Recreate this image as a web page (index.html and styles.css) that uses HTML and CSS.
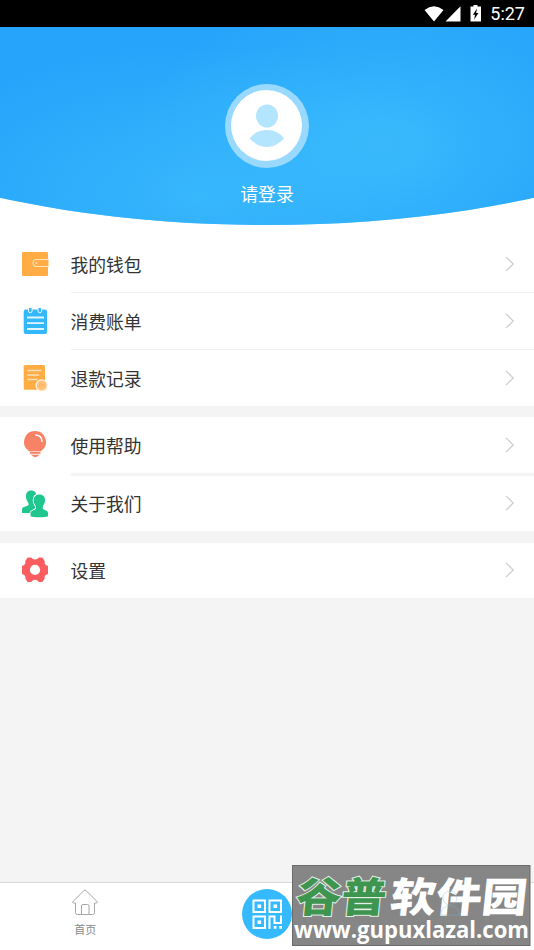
FILE: index.html
```html
<!DOCTYPE html>
<html lang="zh-CN">
<head>
<meta charset="utf-8">
<title>我的</title>
<link rel="stylesheet" href="styles.css">
</head>
<body>
<div class="screen">
  <div class="status">
    <svg width="58" height="18" viewBox="0 0 58 18">
      <path fill="#fff" d="M0.500 5Q10 -2.300 19.500 5L10 16.500zM21.500 16.500H36.500V1.200z"/>
      <path fill="#fff" d="M49.500 1.500V0h4v1.500h3.500V16.500H46.500V1.500z"/>
      <path fill="#000" d="M53 3.500 48.900 9.700h2.200l-1 4.700 4.400-6.500h-2.400z"/>
    </svg>
    <span class="clock">5:27</span>
  </div>
  <header class="profile">
    <div class="avatar">
      <svg width="72" height="72" viewBox="0 0 72 72">
        <circle cx="35.500" cy="35.500" r="35.500" fill="#fff"/>
        <ellipse cx="36" cy="26" rx="11" ry="11.500" fill="#b3e5ff"/>
        <path fill="#b3e5ff" d="M18.500 48.500Q25 40 36 40T53 48.500Q45 57 36 57T18.500 48.500z"/>
      </svg>
    </div>
    <div class="login">请登录</div>
  </header>
  <main>
    <section class="group wallet">
      <div class="row">
        <svg class="icon" viewBox="0 0 28 28"><rect x="1" y="1" width="26" height="24" rx="1.200" fill="#ffac44"/><path d="M27.500 8.500H15.500a3.500 3.500 0 0 0 0 7H27.500" fill="#ffac44"/><path d="M27 8.500H15.500a3.500 3.500 0 0 0 0 7H27" fill="none" stroke="#ffe3bd" stroke-width="1.200"/><circle cx="15.300" cy="12" r="1" fill="#ffe3bd"/></svg>
        <div class="cell"><span>我的钱包</span><svg class="arrow" viewBox="0 0 10 16"><path d="M1 .8 8.200 8 1 15.200"/></svg></div>
      </div>
      <div class="row">
        <svg class="icon" viewBox="0 0 28 28"><rect x="2.700" y="1.500" width="23.300" height="24.500" rx="2" fill="#33b8fb"/><path d="M7.500 0v3a1.800 1.800 0 0 0 3.600 0V0M17 0v3a1.800 1.800 0 0 0 3.600 0V0" fill="#33b8fb" stroke="#fff" stroke-width=".9"/><path d="M6 9.500h17M6 15.200h17M6 21h17" stroke="#e2f6ff" stroke-width="1.800"/></svg>
        <div class="cell"><span>消费账单</span><svg class="arrow" viewBox="0 0 10 16"><path d="M1 .8 8.200 8 1 15.200"/></svg></div>
      </div>
      <div class="row">
        <svg class="icon" viewBox="0 0 28 28"><rect x="2.700" y="0" width="21.300" height="24.800" rx="1.500" fill="#ffac44"/><path d="M6.300 5.500h14M6.300 10h12M6.300 14.500h10" stroke="#ffe2b8" stroke-width="1.500"/><circle cx="20.700" cy="20.500" r="5.600" fill="#ffc27b" stroke="#fff1df" stroke-width="1.300"/><path d="M18.500 21.500v-2.500h4v3h-3l3-3" fill="none" stroke="#ffb05a" stroke-width=".8"/></svg>
        <div class="cell"><span>退款记录</span><svg class="arrow" viewBox="0 0 10 16"><path d="M1 .8 8.200 8 1 15.200"/></svg></div>
      </div>
    </section>
    <section class="group help">
      <div class="row">
        <svg class="icon" viewBox="0 0 28 28"><path d="M14 1a10.900 10.900 0 0 1 6.500 19.700q-1.700 1.300-2 1.800h-9q-.3-.5-2-1.800A10.900 10.900 0 0 1 14 1z" fill="#f88266"/><path d="M14.800 5q6 .6 6.200 6.200" fill="none" stroke="#fff" stroke-width="1.600" stroke-linecap="round"/><path d="M9 22h10.500v1.900H9zM9.500 24.500h9.500l-2.500 1.700L14.200 27.500 12 26.200z" fill="#f88266"/><path d="M8.500 21.500h11M9 24.100h10.500" fill="none" stroke="#fff" stroke-width=".6"/></svg>
        <div class="cell"><span>使用帮助</span><svg class="arrow" viewBox="0 0 10 16"><path d="M1 .8 8.200 8 1 15.200"/></svg></div>
      </div>
      <div class="row">
        <svg class="icon" viewBox="0 0 28 28"><path d="M10 .5c4 0 5.500 2.500 5.300 6 0 3-1.500 4-2 5.500v3l5 2v6H1v-4c.5-2.500 5-2.500 6.500-4 .7-1-.2-2-.8-3C5.500 10 5 8.500 5 6.500 5 3 6.500.5 10 .5z" fill="#1fc78f"/><path d="M18.500 4.500c4 0 5.700 2.500 5.500 6 0 3-1.500 4.200-2.200 6v2.300c1.500 1.500 5.200 1.800 5.200 4.200v3.300c-3 1.300-14 1.300-17.500 0V23c.3-2.500 4-2.700 5.500-4.200V16.500c-1-2-2.300-3-2.300-6 0-3.500 1.800-6 5.800-6z" fill="#1fc78f" stroke="#fff" stroke-width="2" paint-order="stroke"/></svg>
        <div class="cell"><span>关于我们</span><svg class="arrow" viewBox="0 0 10 16"><path d="M1 .8 8.200 8 1 15.200"/></svg></div>
      </div>
    </section>
    <section class="group settings">
      <div class="row">
        <svg class="icon" viewBox="0 0 28 28"><path fill="#fa5d60" fill-rule="evenodd" d="M6.600 1.500h3.600q1.300 2 3.800 2t3.800-2h3.600l2.300 3.500q-.8 3.900 3.300 5v8q-4.200 1-3.300 4.500l-2.300 3.500h-3.600q-1.300-2.200-3.800-2.200T10.200 26H6.600l-2.300-3.500Q5.200 19 1 18v-8q4.100-1.100 3.300-5zM14 8.800a5.100 5.100 0 1 0 0 10.200 5.100 5.100 0 0 0 0-10.200z"/></svg>
        <div class="cell"><span>设置</span><svg class="arrow" viewBox="0 0 10 16"><path d="M1 .8 8.200 8 1 15.200"/></svg></div>
      </div>
    </section>
  </main>
  <nav class="tabs">
    <div class="tab">
      <svg width="26" height="27" viewBox="0 0 26 27"><path d="M3.500 14H1.200Q.3 13.500 1 12.500L12 1.500q1-.9 2 0l11 11q.7 1-.2 1.500h-2.300v9.500q0 2-2 2h-15q-2 0-2-2V14M9.500 25.500V17q0-1.500 1.500-1.500h4.500q1.500 0 1.500 1.500v8.500" fill="none" stroke="#a5a5a5" stroke-width="1"/></svg>
      <span>首页</span>
    </div>
    <div class="tab scan">
      <svg width="50" height="50" viewBox="0 0 50 50"><circle cx="25" cy="25" r="25" fill="#35baff"/><g fill="none" stroke="#fff" stroke-width="2"><path d="M11.500 11.500h11.500V23H11.500zM27.500 11.500H39V23H27.500zM11.500 27.500h11.500V39H11.500z"/><path d="M27.500 40V27.500h5V34H39v-7.500"/></g><path fill="#fff" d="M15.500 15.500h3.600v3.600h-3.600zM31.500 15.500h3.600v3.600h-3.600zM15.500 31.500h3.600v3.600h-3.600zM31.800 37h2.700v2.700h-2.700zM37.300 37H40v2.700h-2.700z"/></svg>
    </div>
    <div class="tab"></div>
  </nav>
  <svg class="mark" width="239" height="82" viewBox="0 0 239 82">
    <rect x=".5" y=".5" width="237.500" height="80" fill="#868686" stroke="#6b6b6b"/>
    <g class="brand" transform="translate(0 47) skewX(-6)">
      <text class="green" x="3" y="0" textLength="90" lengthAdjust="spacingAndGlyphs">谷普</text>
      <text class="white" x="97" y="0" textLength="137" lengthAdjust="spacingAndGlyphs">软件园</text>
    </g>
    <text class="url" x="2" y="73" textLength="235" lengthAdjust="spacingAndGlyphs">www.gupuxlazal.com</text>
    <g fill="none" stroke="#7fb5cf" stroke-width="1" opacity=".35"><circle cx="158" cy="33" r="7"/><path d="M149 50q0-9 9-9t9 9z"/></g>
  </svg>
</div>
</body>
</html>
```
FILE: styles.css
```css
* { box-sizing: border-box; }
body { margin: 0; font-family: "Noto Sans CJK SC", sans-serif; }
.screen {
  position: relative;
  width: 534px;
  height: 950px;
  overflow: hidden;
  display: flex;
  flex-direction: column;
  background: #f4f4f4;
}
.status {
  flex: none;
  height: 27px;
  padding: 0 9px 0 0;
  display: flex;
  justify-content: flex-end;
  align-items: center;
  gap: 8px;
  background: #000;
  color: #fff;
}
.clock { font: 400 18px/27px Roboto, sans-serif; }
.profile {
  flex: none;
  height: 198px;
  padding-top: 57px;
  display: flex;
  flex-direction: column;
  align-items: center;
  background:
    radial-gradient(ellipse 250px 150px at 72% 58%, rgba(60, 189, 252, .85) 0%, rgba(60, 189, 252, .4) 50%, rgba(60, 189, 252, 0) 100%),
    radial-gradient(ellipse 290px 150px at 36% 85%, rgba(58, 186, 252, .8) 0%, rgba(58, 186, 252, .4) 50%, rgba(58, 186, 252, 0) 100%),
    #26a4fb;
  clip-path: ellipse(528px 198px at 50% 0);
}
.avatar {
  width: 84px;
  height: 84px;
  padding: 6px;
  border-radius: 50%;
  background: #98d9fd;
}
.avatar svg { display: block; }
.login { margin-top: 12px; font-size: 17.8px; line-height: 26px; color: #fff; }
main { flex: 1; margin-top: -30px; }
.group { background: #fff; }
.wallet { padding-top: 41px; margin-bottom: 11px; }
.help { margin-bottom: 12px; }
.row { display: flex; height: 57px; padding-left: 21px; gap: 21.5px; }
.icon { width: 28px; height: 28px; margin-top: 15px; flex: none; }
.cell {
  flex: 1;
  display: flex;
  justify-content: space-between;
  align-items: center;
  padding-right: 19px;
  border-bottom: 1px solid #f0f0f0;
  font-size: 17.8px;
  color: #333;
}
.arrow { width: 10px; height: 16px; fill: none; stroke: #ccc; stroke-width: 1.2; }
.row:last-child .cell { border-bottom: 0; }
.wallet .row:last-child { height: 56px; }
.help .row:first-child { height: 59px; }
.help .row:first-child .cell { border-bottom: 3px solid #f4f4f4; }
.help .row:last-child, .settings .row { height: 55px; }
.help .row:last-child .cell, .settings .cell { padding-bottom: 2px; }
.help .row:first-child .icon { margin-top: 13px; }
.settings .icon { margin-top: 13px; }
.help .row:last-child .icon { margin-top: 14px; }
.tabs {
  flex: none;
  display: flex;
  height: 68px;
  background: #fff;
  border-top: 1px solid #d9d9d9;
}
.tab {
  width: 171px;
  display: flex;
  flex-direction: column;
  align-items: center;
  padding-top: 6px;
  font-size: 11px;
  line-height: 16px;
  color: #888;
}
.tab span { margin-top: 5px; }
.scan { width: 194px; }
.mark { position: absolute; left: 292px; top: 865px; }
.brand { font-size: 41px; font-weight: 900; }
.green { fill: #3d9550; stroke: #e4efe6; stroke-width: 2px; paint-order: stroke; }
.white { fill: #fff; }
.url { font: 700 23px "Open Sans", sans-serif; fill: #fff; }
```
